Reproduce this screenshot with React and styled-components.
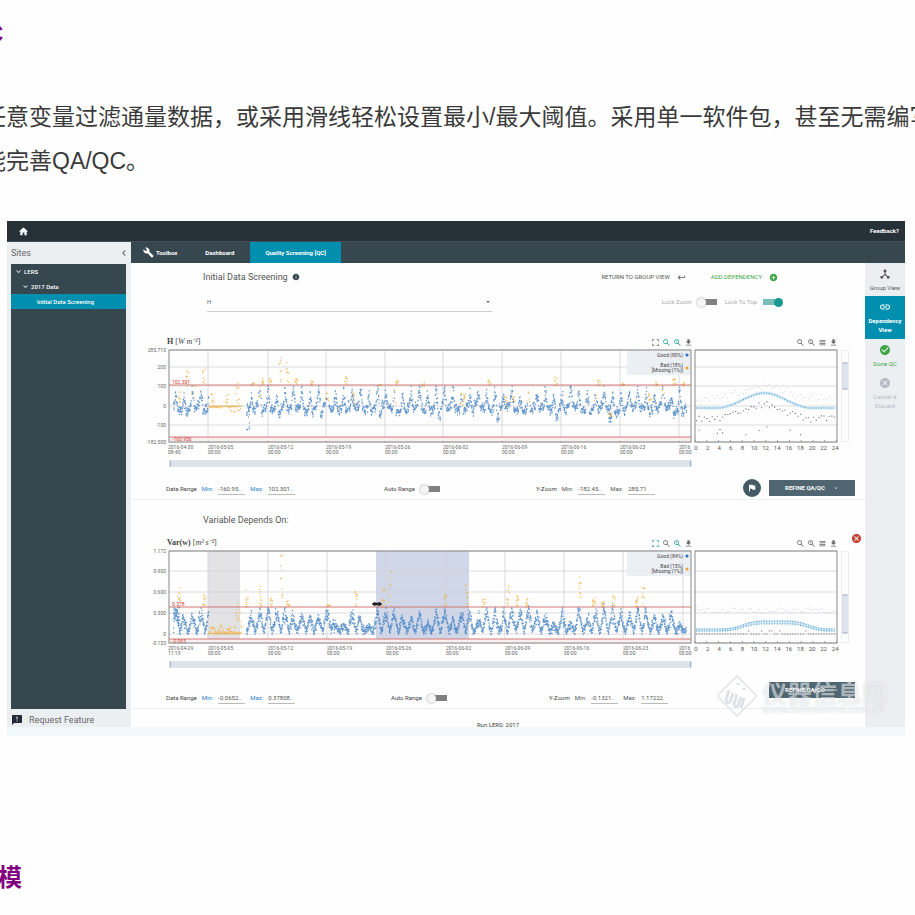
import React from 'react'
import styled, { createGlobalStyle } from 'styled-components'
import {
    MdHome,
    MdBuild,
    MdAnnouncement,
    MdDeviceHub,
    MdLink,
    MdCheckCircle,
    MdCancel,
    MdFlag,
    MdKeyboardReturn,
    MdAddCircle,
    MdInfo,
    MdCropFree,
    MdZoomIn,
    MdSearch,
    MdViewHeadline,
    MdFileDownload,
    MdExpandMore,
    MdArrowDropDown,
    MdChevronLeft
} from 'react-icons/md'

const GlobalStyle = createGlobalStyle`
* {
    box-sizing: border-box;
}
body {
    margin: 0;
    background: #fefefe;
}
`

const Article = styled.article`
    overflow: hidden;
    padding-top: 12px;
    font-family: 'Liberation Sans', 'Noto Sans CJK SC', sans-serif;
    color: #3a3a3a;
`

const Heading = styled.h2`
    margin: 0 0 0 ${props => props.$shift};
    font-size: 24px;
    line-height: 44px;
    color: #800080;
`

const Paragraph = styled.p`
    margin: 39px 0 38px -17px;
    font-size: 23px;
    line-height: 44px;
    white-space: nowrap;
`

const Figure = styled.section`
    position: relative;
    margin: 0 10px 120px 7px;
    border-bottom: 9px solid #f0f8fb;
    background: #fefefe;
    font-family: Roboto, sans-serif;
    font-size: 6px;
    line-height: 8px;
    color: #444;
`

const TopBar = styled.header`
    display: flex;
    align-items: center;
    justify-content: space-between;
    height: 21px;
    padding: 0 6px 0 11px;
    background: #263238;
    border-bottom: 1px solid #43525a;
    color: #fff;

    svg {
        width: 11px;
        height: 11px;
    }
`

const TopLink = styled.a`
    display: flex;
    color: #fff;
    font-weight: 700;
    text-decoration: none;
`

const Body = styled.div`
    display: flex;
    height: 485px;
`

const Sidebar = styled.aside`
    display: flex;
    flex-direction: column;
    flex: none;
    width: 124px;
    padding: 0 5px 0 4px;
    background: #eceff2;
`

const SideHead = styled.div`
    display: flex;
    align-items: center;
    justify-content: space-between;
    height: 22px;
    font-size: 9px;
    color: #666;

    svg {
        width: 12px;
        height: 12px;
        margin-right: -4px;
    }
`

const Tree = styled.ul`
    flex: 1;
    margin: 0;
    padding: 0;
    background: #37474f;
    list-style: none;
`

const TreeItem = styled.li`
    display: flex;
    align-items: center;
    gap: 1px;
    height: 15px;
    padding-left: ${props => props.$indent};
    background: ${props => (props.$active ? '#018fb0' : 'transparent')};
    color: #fff;
    font-weight: 500;

    svg {
        width: 9px;
        height: 9px;
    }
`

const RequestLink = styled.a`
    display: flex;
    align-items: center;
    gap: 6px;
    height: 18px;
    padding-top: 3px;
    font-size: 9px;
    color: #666;
    text-decoration: none;

    svg {
        width: 12px;
        height: 12px;
        color: #222b33;
    }
`

const Content = styled.div`
    display: flex;
    flex-direction: column;
    flex: 1;
    min-width: 0;
`

const Tabs = styled.nav`
    display: flex;
    flex: none;
    height: 21px;
    background: #37474f;
`

const Tab = styled.a`
    display: flex;
    align-items: center;
    gap: 2px;
    padding: ${props => (props.$active ? '0 15px' : '0 16px 0 12px')};
    background: ${props => (props.$active ? '#018fb0' : 'transparent')};
    color: #fff;
    font-weight: 700;
    text-decoration: none;

    svg {
        width: 11px;
        height: 11px;
    }
`

const Workspace = styled.div`
    display: flex;
    flex: 1;
    min-height: 0;
`

const Main = styled.main`
    flex: 1;
    min-width: 0;
    padding-top: 6px;
    overflow: hidden;
`

const TitleRow = styled.div`
    display: flex;
    align-items: center;
    height: 16px;
    margin-top: ${props => props.$top || '0'};
    padding: 0 87px 0 72px;
`

const Title = styled.h3`
    display: flex;
    flex: 1;
    align-items: center;
    gap: 4px;
    margin: 0;
    font-size: 9px;
    font-weight: 400;
    color: #555;

    svg {
        width: 8px;
        height: 8px;
        color: #37474f;
    }
`

const TextButton = styled.button`
    display: flex;
    align-items: center;
    gap: 7px;
    margin-left: 25px;
    padding: 0;
    border: 0;
    background: none;
    font: inherit;
    color: ${props => (props.$green ? '#3fa646' : '#555')};

    svg {
        width: 9px;
        height: 9px;
    }
`

const SelectRow = styled.div`
    display: flex;
    justify-content: space-between;
    align-items: center;
    height: 20px;
    margin: 7px 82px 26px 76px;
`

const SelectBox = styled.div`
    display: flex;
    align-items: center;
    flex: 0 1 285px;
    height: 20px;
    border-bottom: 1px solid #ccc;

    svg {
        flex: none;
        width: 8px;
        height: 8px;
        margin-left: -8px;
        pointer-events: none;
    }
`

const VariableSelect = styled.select`
    flex: 1;
    height: 19px;
    padding: 0;
    border: 0;
    appearance: none;
    background: none;
    font: inherit;
    color: #666;
`

const Locks = styled.div`
    display: flex;
    gap: 7px;
    color: #aaa;
`

const ToggleLabel = styled.label`
    display: flex;
    align-items: center;
    gap: 5px;
`

const Toggle = styled.input`
    display: flex;
    align-items: center;
    width: 21px;
    height: 9px;
    margin: 0;
    appearance: none;
    background: linear-gradient(#808080, #808080) center / 19px 6px no-repeat;
    border-radius: 4px;

    &::before {
        content: '';
        width: 9px;
        height: 9px;
        border-radius: 50%;
        background: #f5f5f5;
        box-shadow: 0 0 2px #888;
    }

    &:checked {
        justify-content: flex-end;
        background-image: linear-gradient(#7cbcb8, #7cbcb8);
    }

    &:checked::before {
        background: #179a92;
        box-shadow: none;
    }
`

const ChartBlock = styled.section`
    position: relative;
    display: grid;
    grid-template-columns: minmax(0, 548fr) minmax(0, 148fr) 8px;
    margin-top: ${props => props.$top};
    padding: 0 16px 0 14px;
`

const ChartHead = styled.div`
    display: flex;
    align-items: center;
    justify-content: space-between;
    height: 8px;
    padding: 0 ${props => (props.$side ? '3px' : '0')} 0 22px;
`

const ChartName = styled.span`
    font-family: 'Liberation Serif', serif;
    font-size: 8px;
    white-space: nowrap;
`

const Tools = styled.span`
    display: flex;
    gap: 2px;
    margin-left: auto;
`

const ToolButton = styled.button`
    display: flex;
    padding: 0;
    border: 0;
    background: none;
    color: ${props => (props.$on ? '#25a09a' : '#666')};

    svg {
        width: 9px;
        height: 9px;
    }
`

const ChartSvg = styled.svg`
    display: block;
    width: 100%;
    font-family: Roboto, sans-serif;
    font-size: 5px;
`

const RangeBar = styled.div`
    height: 92px;
    margin-top: 4px;
    padding-top: ${props => props.$top};
    border: 1px solid #eee;
`

const RangeThumb = styled.div`
    height: ${props => props.$size};
    border: 1px solid #c4c8d4;
    border-width: 2px 0;
    border-radius: 2px;
    background: #dfe2ec;
`

const ScrollTrack = styled.div`
    display: flex;
    justify-content: space-between;
    align-items: center;
    height: 7px;
    margin: 2px 1px 0 24px;
    padding: 0 1px;
    background: #dde1eb;

    &::before,
    &::after {
        content: '';
        width: 1px;
        height: 5px;
        background: #a9aebb;
    }
`

const RemoveButton = styled.button`
    position: absolute;
    top: -6px;
    right: 3px;
    display: flex;
    padding: 0;
    border: 0;
    background: none;
    color: #c74334;

    svg {
        width: 11px;
        height: 11px;
    }
`

const RangeRow = styled.div`
    display: grid;
    grid-template-columns: ${props => props.$columns};
    align-items: end;
    min-height: ${props => props.$height};
    margin-top: ${props => props.$top};
    padding: 0 10px 0 35px;
    border-bottom: 1px solid #eee;
`

const RangeGroup = styled.div`
    display: flex;
    align-items: center;
    gap: 5px;
    height: 20px;
    white-space: nowrap;
`

const RangeField = styled.label`
    display: flex;
    align-items: center;
    gap: 5px;
    color: ${props => (props.$blue ? '#2a7fc0' : '#555')};
`

const RangeInput = styled.input`
    width: 27px;
    height: 11px;
    padding: 0;
    border: 0;
    border-bottom: 1px solid #bbb;
    background: none;
    font: inherit;
    color: #555;
`

const Actions = styled.div`
    display: flex;
    align-self: start;
    align-items: center;
    gap: 8px;
`

const FlagButton = styled.button`
    display: flex;
    align-items: center;
    justify-content: center;
    width: 18px;
    height: 18px;
    padding: 0;
    border: 0;
    border-radius: 50%;
    background: #455a64;
    color: #fff;

    svg {
        width: 10px;
        height: 10px;
    }
`

const RefineButton = styled.button`
    display: flex;
    align-items: center;
    justify-content: center;
    gap: 8px;
    width: 86px;
    height: 16px;
    padding: 0;
    border: 0;
    background: #4f6672;
    font: inherit;
    font-weight: 700;
    color: #fff;

    svg {
        width: 6px;
        height: 6px;
    }
`

const NextPanel = styled.div`
    padding-top: 12px;
    text-align: center;
`

const Rail = styled.nav`
    flex: none;
    width: 40px;
    background: #eceff2;
`

const RailItem = styled.a`
    display: flex;
    flex-direction: column;
    align-items: center;
    gap: 3px;
    padding: ${props => (props.$active ? '5px 0' : '5px 0 4px')};
    background: ${props => (props.$active ? '#018fb0' : 'transparent')};
    color: ${props => props.$color};
    font-weight: ${props => (props.$active ? 700 : 400)};
    line-height: 9px;
    text-align: center;
    text-decoration: none;

    svg {
        width: 12px;
        height: 12px;
    }
`

const Watermark = styled.div`
    position: absolute;
    right: 18px;
    bottom: 9px;
    display: flex;
    align-items: center;
    gap: 4px;
    font-family: 'Noto Sans CJK SC', sans-serif;
    font-size: 25px;
    font-weight: 700;
    line-height: 26px;
    color: rgba(255, 255, 255, 0.5);
    text-shadow: 0 0 2px rgba(120, 130, 140, 0.25);
    pointer-events: none;

    svg {
        width: 42px;
        height: 44px;
    }

    small {
        display: block;
        font-size: 10px;
        line-height: 8px;
    }
`

// small seeded generator so the traces are the same on every render
const makeRandom = seed => {
    let s = seed
    return () => {
        s = (s * 16807) % 2147483647
        return s / 2147483647
    }
}

const dot = (x, y) => `M${x.toFixed(1)} ${y.toFixed(1)}h1.2`

const DAY = 8.4

// orange spikes above the upper limit: [x, highest y]
const fluxSpikes = [
    [33, 44], [41, 22], [49, 40], [58, 20], [66, 48], [107, 36], [117, 31], [124, 31],
    [134, 12], [142, 15], [150, 30], [166, 34], [200, 30], [208, 46], [234, 38],
    [251, 33], [277, 36], [343, 33], [360, 50], [368, 50], [410, 30], [453, 34],
    [477, 37], [504, 44], [511, 36], [528, 32], [537, 35], [318, 48]
]

const varianceSpikes = [
    [33, 40], [58, 48], [101, 42], [115, 38], [125, 50], [135, 6], [142, 54],
    [183, 57], [210, 44], [237, 40], [244, 22], [299, 48], [321, 36],
    [338, 52], [362, 38], [372, 46], [381, 52], [434, 27], [448, 50],
    [456, 55], [468, 46], [491, 50], [497, 40]
]

const buildFlux = () => {
    const rand = makeRandom(71)
    const good = []
    const bad = []
    for (let x = 28; x < 541; x += 0.42) {
        const day = Math.floor((x - 26) / DAY)
        const phase = ((x - 26) % DAY) / DAY
        if (x > 96 && x < 101) continue
        if (x > 63 && x <= 96) {
            bad.push([x, 60 + rand() * 0.6])
            if (rand() > 0.6) bad.push([x, 60 + (x > 84 ? rand() * 7 : rand() * 2)])
            if (x > 90 && x < 94) bad.push([x, 34 + rand() * 24])
            if (x > 80 && x < 83) bad.push([x, 48 + rand() * 12])
            continue
        }
        const base = 60 + Math.sin(day * 1.7) * 2.5
        const low = day % 7 === 3 ? 7 : 2
        const bell = Math.exp(-(((phase - 0.5) / 0.17) ** 2))
        const peak = 15 + ((day * 13) % 9)
        const y = base + (rand() - 0.4) * 8 + (phase > 0.7 ? low : 0)
        if (bell > 0.25) {
            const py = Math.max(40, base - peak * bell * (0.3 + rand() * 0.8))
            if (day % 8 === 2 && rand() > 0.4) bad.push([x, py])
            else {
                good.push([x, py])
                good.push([x, py + rand() * 7])
            }
        } else {
            good.push([x, y])
            good.push([x, y + rand() * 3])
        }
    }
    fluxSpikes.forEach(([x, top]) => {
        const reach = top > 40 ? 58 : 40
        for (let i = 0; i < 9; i++) {
            bad.push([x - 1 + rand() * 3, top + rand() * (reach - top)])
        }
    })
    for (let i = 0; i < 14; i++) {
        bad.push([463 + rand() * 4, 66 + rand() * 9])
        good.push([463 + rand() * 3, 67 + rand() * 9])
    }
    for (let i = 0; i < 8; i++) good.push([101 + rand() * 3, 66 + rand() * 18])
    return { good, bad }
}

const buildVariance = () => {
    const rand = makeRandom(345)
    const good = []
    const bad = []
    const heights = Array.from({ length: 64 }, () => 8 + rand() * 18)
    for (let x = 28; x < 541; x += 0.36) {
        const day = Math.floor((x - 26) / DAY)
        const phase = ((x - 26) % DAY) / DAY
        if (x > 96 && x < 101) continue
        if (x > 63 && x <= 96) {
            if (rand() > 0.3) bad.push([x, 87 - rand() * 1.5])
            const h = x > 86 ? (x - 85) * 4.5 : 10
            bad.push([x, 87 - Math.abs(Math.sin((x - 63) * 0.38)) * h * rand()])
            continue
        }
        const near = varianceSpikes.some(([sx]) => Math.abs(sx - x) < 5)
        const peak = near ? 27 : heights[day]
        const tri = 1 - Math.abs(phase - 0.5) * 2
        const y = 86 - peak * tri * (0.5 + rand() * 0.5) - rand() * 5
        good.push([x, Math.max(61, y)])
        good.push([x, Math.min(87, y + 1 + rand() * 4)])
    }
    varianceSpikes.forEach(([x, top]) => {
        for (let i = 0; i < 12; i++) {
            bad.push([x - 1 + rand() * 3, top + rand() * (60 - top)])
        }
    })
    for (let i = 0; i < 30; i++) good.push([28 + rand() * 6, 60 + rand() * 14])
    return { good, bad }
}

const buildDaily = () => {
    const rand = makeRandom(9)
    const mean = []
    const upper = []
    const lower = []
    for (let x = 3; x < 141; x += 2.6) {
        const b = Math.max(0, Math.exp(-(((x - 71) / 30) ** 2)) * 17 - 2)
        mean.push([x, 62 - b])
        upper.push([x, 55 - b * 0.7 - rand() * 8])
        lower.push([x, 76 - b * 0.9 - rand() * 7])
        if (rand() > 0.85) lower.push([x, 80 + rand() * 10])
    }
    return { mean, band: mean, upper, lower }
}

const buildDailyVariance = () => {
    const rand = makeRandom(19)
    const mean = []
    const band = []
    const upper = []
    const lower = []
    for (let x = 3; x < 141; x += 2.6) {
        const b = Math.exp(-(((x - 82) / 36) ** 4)) * 8
        mean.push([x, 82 - b], [x, 84 - b * 0.9])
        band.push([x, 83 - b])
        upper.push([x, 61 + rand() * 5])
        lower.push([x, 87 - (b > 4 && rand() > 0.6 ? 3 : 0)])
    }
    return { mean, band, upper, lower }
}

const toPath = points => points.map(([x, y]) => dot(x, y)).join('')

const daily = buildDaily()
const dailyVariance = buildDailyVariance()

const fluxChart = {
    data: buildFlux(),
    rows: [[4, '285.710'], [21, '200'], [40, '100'], [60, '0'], [79, '-100'], [96, '-182.500']],
    ticks: [63, 123, 181, 240, 298, 357, 416, 475, 534],
    limits: [39, 91],
    limitText: ['102.301', '-160.956'],
    start: ['2016-04-30', '08:40'],
    good: 'Good (80%)',
    bad: 'Bad (18%)',
    missing: '[Missing (1%)]'
}

const varianceChart = {
    data: buildVariance(),
    rows: [[4, '1.172'], [24, '0.900'], [45, '0.600'], [66, '0.300'], [87, '0'], [96, '-0.133']],
    ticks: [63, 123, 182, 241, 301, 360, 419, 478, 538],
    limits: [60, 92],
    limitText: ['0.378', '-0.065'],
    start: ['2016-04-29', '11:19'],
    selection: true,
    good: 'Good (84%)',
    bad: 'Bad (15%)',
    missing: '[Missing (1%)]'
}

const dates = [
    '2016-05-05', '2016-05-12', '2016-05-19', '2016-05-26', '2016-06-02',
    '2016-06-09', '2016-06-16', '2016-06-23', '2016'
]

const SeriesChart = ({ chart }) => (
    <ChartSvg viewBox="0 0 548 112">
        {chart.selection && (
            <>
                <rect x="63" y="4" width="32" height="92" fill="#e3e3e5" />
                <rect x="231" y="4" width="93" height="92" fill="#d0d7e9" />
            </>
        )}
        {chart.rows.map(([y, label]) => (
            <g key={label}>
                <line x1="24" x2="546" y1={y} y2={y} stroke="#cfcfd4" strokeWidth="0.7" />
                <text x="21" y={y + 2} textAnchor="end" fill="#666">{label}</text>
            </g>
        ))}
        {chart.ticks.map((x, i) => (
            <g key={x} fill="#666">
                <line x1={x} x2={x} y1="4" y2="96" stroke="#d2d2da" strokeWidth="0.8" />
                <line x1={x} x2={x} y1="92" y2="96" stroke="#777" strokeWidth="0.8" />
                <text x={Math.min(x, 534)} y="103">{dates[i]}</text>
                <text x={Math.min(x, 534)} y="108">00:00</text>
            </g>
        ))}
        <text x="23" y="103" fill="#666">{chart.start[0]}</text>
        <text x="23" y="108" fill="#666">{chart.start[1]}</text>
        <rect x="24" y={chart.limits[1]} width="522" height="4" fill="#fbeeee" />
        <path d={toPath(chart.data.bad)} stroke="#eeb144" strokeWidth="1.2" fill="none" opacity="0.8" />
        <path d={toPath(chart.data.good)} stroke="#3a7cc0" strokeWidth="1.3" fill="none" opacity="0.8" />
        {chart.limits.map((y, i) => (
            <g key={y}>
                <line x1="24" x2="546" y1={y} y2={y} stroke="#cf6a66" strokeWidth="0.9" />
                <text x="27" y={i === 0 ? y - 1 : y + 4} fill="#d23b33">{chart.limitText[i]}</text>
            </g>
        ))}
        <rect x="482" y="4" width="64" height="25" fill="#e9ecf2" opacity="0.85" />
        <g fill="#444" textAnchor="end">
            <text x="538" y="11">{chart.good}</text>
            <text x="538" y="21">{chart.bad}</text>
            <text x="538" y="26">{chart.missing}</text>
        </g>
        <circle cx="542" cy="9" r="1.6" fill="#2d6fc4" />
        <circle cx="542" cy="22" r="1.6" fill="#f0a52e" />
        <rect x="24" y="4" width="522" height="92" fill="none" stroke="#888" />
        {chart.selection && (
            <path d="M227 57l3-2v1h4v-1l3 2-3 2v-1h-4v1z" fill="#222" stroke="#222" strokeWidth="0.6" />
        )}
    </ChartSvg>
)

const DailyChart = ({ rows, data }) => (
    <ChartSvg viewBox="0 0 148 112">
        {rows.map(([y, label]) => (
            <line key={label} x1="2" x2="144" y1={y} y2={y} stroke="#cfcfd4" strokeWidth="0.7" />
        ))}
        {Array.from({ length: 13 }, (_, i) => (
            <g key={i}>
                <line x1={2 + i * 11.8} x2={2 + i * 11.8} y1="94" y2="96" stroke="#777" strokeWidth="0.7" />
                <text x={3 + i * 11.6} y="104" textAnchor="middle" fontSize="6" fill="#555">{i * 2}</text>
            </g>
        ))}
        <path
            d={'M' + data.band.map(([x, y]) => `${x} ${y.toFixed(1)}`).join('L')}
            stroke="#d3eaf6"
            strokeWidth="3"
            fill="none"
        />
        <path d={toPath(data.mean)} stroke="#4194c9" strokeWidth="1.2" fill="none" opacity="0.8" />
        <path d={toPath(data.upper)} stroke="#d0d2de" strokeWidth="1" fill="none" />
        <path d={toPath(data.lower)} stroke="#777582" strokeWidth="1.1" fill="none" />
        <rect x="2" y="4" width="142" height="92" fill="none" stroke="#888" />
    </ChartSvg>
)

const SeriesTools = ({ fitOn }) => (
    <Tools>
        <ToolButton aria-label="Fit" $on={fitOn}><MdCropFree /></ToolButton>
        <ToolButton aria-label="Zoom" $on={!fitOn}><MdSearch /></ToolButton>
        <ToolButton aria-label="Zoom in" $on><MdZoomIn /></ToolButton>
        <ToolButton aria-label="Download"><MdFileDownload /></ToolButton>
    </Tools>
)

const DailyTools = () => (
    <Tools>
        <ToolButton aria-label="Zoom"><MdSearch /></ToolButton>
        <ToolButton aria-label="Zoom in"><MdZoomIn /></ToolButton>
        <ToolButton aria-label="List"><MdViewHeadline /></ToolButton>
        <ToolButton aria-label="Download"><MdFileDownload /></ToolButton>
    </Tools>
)

const ChartPanel = ({ name, chart, dailyData, top, thumbTop, thumbSize, removable }) => (
    <ChartBlock $top={top}>
        <ChartHead>
            <ChartName>{name}</ChartName>
            <SeriesTools fitOn={removable} />
        </ChartHead>
        <ChartHead $side>
            <DailyTools />
        </ChartHead>
        <span />
        <SeriesChart chart={chart} />
        <DailyChart rows={chart.rows} data={dailyData} />
        <RangeBar $top={thumbTop}>
            <RangeThumb $size={thumbSize} />
        </RangeBar>
        <ScrollTrack />
        {removable && (
            <RemoveButton aria-label="Remove dependency"><MdCancel /></RemoveButton>
        )}
    </ChartBlock>
)

const RangeControls = ({ columns, top, height, values, children }) => (
    <RangeRow $columns={columns} $top={top} $height={height}>
        <RangeGroup>
            Data Range
            <RangeField $blue>Min: <RangeInput defaultValue={values[0]} /></RangeField>
            <RangeField $blue>Max: <RangeInput defaultValue={values[1]} /></RangeField>
        </RangeGroup>
        <RangeGroup>
            <ToggleLabel>Auto Range <Toggle type="checkbox" /></ToggleLabel>
        </RangeGroup>
        <RangeGroup>
            Y-Zoom
            <RangeField>Min: <RangeInput defaultValue={values[2]} /></RangeField>
            <RangeField>Max: <RangeInput defaultValue={values[3]} /></RangeField>
        </RangeGroup>
        <Actions>{children}</Actions>
    </RangeRow>
)

const App = () => {
  return (
    <Article>
        <GlobalStyle />
        <Heading $shift="-14px">C</Heading>
        <Paragraph>
            任意变量过滤通量数据，或采用滑线轻松设置最小/最大阈值。采用单一软件包，甚至无需编写
            <br />
            能完善QA/QC。
        </Paragraph>

        <Figure>
            <TopBar>
                <TopLink href="#home" aria-label="Home"><MdHome /></TopLink>
                <TopLink href="#feedback">Feedback?</TopLink>
            </TopBar>
            <Body>
                <Sidebar>
                    <SideHead>Sites <MdChevronLeft /></SideHead>
                    <Tree>
                        <TreeItem $indent="3px"><MdExpandMore />LERS</TreeItem>
                        <TreeItem $indent="10px"><MdExpandMore />2017 Data</TreeItem>
                        <TreeItem $indent="26px" $active>Initial Data Screening</TreeItem>
                    </Tree>
                    <RequestLink href="#request"><MdAnnouncement />Request Feature</RequestLink>
                </Sidebar>

                <Content>
                    <Tabs>
                        <Tab href="#toolbox"><MdBuild />Toolbox</Tab>
                        <Tab href="#dashboard">Dashboard</Tab>
                        <Tab href="#qc" $active>Quality Screening [QC]</Tab>
                    </Tabs>
                    <Workspace>
                        <Main>
                            <TitleRow>
                                <Title>Initial Data Screening <MdInfo /></Title>
                                <TextButton>RETURN TO GROUP VIEW <MdKeyboardReturn /></TextButton>
                                <TextButton $green>ADD DEPENDENCY <MdAddCircle /></TextButton>
                            </TitleRow>
                            <SelectRow>
                                <SelectBox>
                                    <VariableSelect aria-label="Variable">
                                        <option>H</option>
                                    </VariableSelect>
                                    <MdArrowDropDown />
                                </SelectBox>
                                <Locks>
                                    <ToggleLabel>Lock Zoom <Toggle type="checkbox" /></ToggleLabel>
                                    <ToggleLabel>Lock To Top <Toggle type="checkbox" defaultChecked /></ToggleLabel>
                                </Locks>
                            </SelectRow>

                            <ChartPanel
                                name={<><b>H</b> [<i>W m⁻²</i>]</>}
                                chart={fluxChart}
                                dailyData={daily}
                                top="0"
                                thumbTop="11px"
                                thumbSize="28px"
                            />
                            <RangeControls
                                columns="218fr 152fr 207fr auto"
                                top="12px"
                                height="20px"
                                values={['-160.95..', '102.301..', '-182.45..', '285.71']}
                            >
                                <FlagButton aria-label="Flag"><MdFlag /></FlagButton>
                                <RefineButton>REFINE QA/QC <MdExpandMore /></RefineButton>
                            </RangeControls>

                            <TitleRow $top="12px">
                                <Title>Variable Depends On:</Title>
                            </TitleRow>

                            <ChartPanel
                                name={<><b>Var(w)</b> [<i>m² s⁻²</i>]</>}
                                chart={varianceChart}
                                dailyData={dailyVariance}
                                top="11px"
                                thumbTop="42px"
                                thumbSize="40px"
                                removable
                            />
                            <RangeControls
                                columns="225fr 158fr 220fr auto"
                                top="14px"
                                height="27px"
                                values={['-0.0652..', '0.37808..', '-0.1321..', '1.17222']}
                            >
                                <RefineButton>REFINE QA/QC <MdExpandMore /></RefineButton>
                            </RangeControls>
                            <NextPanel>Run LERS: 2017</NextPanel>
                        </Main>
                        <Rail>
                            <RailItem href="#group" $color="#555"><MdDeviceHub />Group View</RailItem>
                            <RailItem href="#dependency" $color="#fff" $active><MdLink />Dependency View</RailItem>
                            <RailItem href="#done" $color="#3fa646"><MdCheckCircle />Done QC</RailItem>
                            <RailItem href="#cancel" $color="#b4b9c2"><MdCancel />Cancel &amp; Discard</RailItem>
                        </Rail>
                    </Workspace>
                </Content>
            </Body>
            <Watermark>
                <svg viewBox="0 0 42 44" fill="none" stroke="#dfe2e6" strokeWidth="1.5">
                    <path d="M21 2l18 18q2 2 0 4L21 42 3 24q-2-2 0-4z" />
                    <path d="M13 16l-3 10q0 4 4 2l3-9M21 20l-3 10q0 4 4 2l3-9M28 24l-3 10M22 9v2M28 14v2" strokeWidth="3" />
                </svg>
                <div>
                    仪器信息网
                    <small>www.instrument.com.cn</small>
                </div>
            </Watermark>
        </Figure>

        <Heading $shift="-2px">模</Heading>
    </Article>
  )
}

export default App
